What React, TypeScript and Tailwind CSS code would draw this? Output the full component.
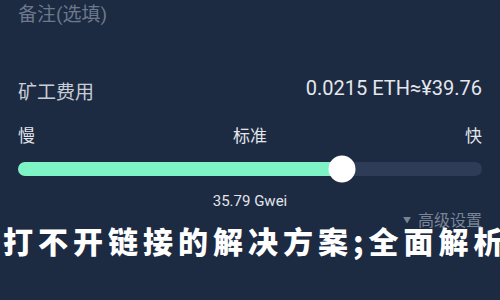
import React from 'react';

const sans = { fontFamily: 'Roboto, "Noto Sans CJK SC", sans-serif' };

function App() {
  const pct = 69.8; // slider position

  return (
    <div
      className="relative w-[500px] h-[300px] overflow-hidden bg-[#1c2a42] px-[18px]"
      style={sans}
    >
      {/* Memo */}
      <div className="h-[27px] pt-[3px] text-[19px] leading-[24px] text-[#6d788a]">备注(选填)</div>

      {/* Miner fee */}
      <div className="mt-[48px] flex items-start justify-between">
        <span className="mt-[5px] text-[19px] leading-[26px] text-[#c9ced6]">矿工费用</span>
        <span className="text-[20px] leading-[26px] text-[#e4e7ec]">0.0215 ETH≈¥39.76</span>
      </div>

      {/* Speed labels */}
      <div className="mt-[19px] flex justify-between text-[17px] leading-[22px] text-[#e2e5ea]">
        <span>慢</span>
        <span>标准</span>
        <span>快</span>
      </div>

      {/* Slider */}
      <div className="relative mt-[15px] h-[14px] rounded-full bg-[#2f3c58]">
        <div className="h-full rounded-full bg-[#7ef3c6]" style={{ width: `${pct}%` }} />
        <div
          className="absolute top-1/2 h-[27px] w-[27px] -translate-x-1/2 -translate-y-1/2 rounded-full bg-white"
          style={{ left: `${pct}%` }}
        />
      </div>

      <div className="mt-[15px] text-center text-[15px] leading-[20px] text-[#e2e5ea]">35.79 Gwei</div>

      <div className="flex items-center justify-end gap-[7px] text-[16px] leading-[20px] text-[#7a8497]">
        <span className="text-[8px]">▼</span>
        <span>高级设置</span>
      </div>

      {/* Overlay title */}
      <div
        className="absolute left-[-32px] top-[221px] whitespace-nowrap text-[30px] font-black leading-[38px] tracking-[5px] text-white"
        style={{ fontFamily: '"Noto Sans CJK SC", sans-serif' }}
      >
        的打不开链接的解决方案;全面解析
      </div>
    </div>
  );
}

export default App;
